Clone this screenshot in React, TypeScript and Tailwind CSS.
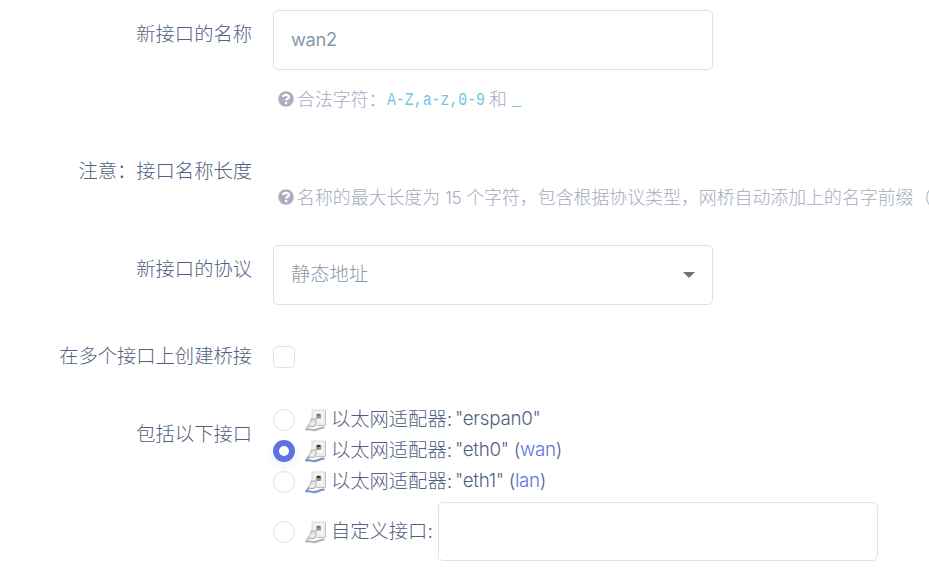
import type { ReactNode } from "react";

function Row({ label, className, labelClass, children }: { label: string; className: string; labelClass: string; children?: ReactNode }) {
  return (
    <div className={`flex ${className}`}>
      <div className={`w-[252px] shrink-0 text-right leading-[30px] whitespace-nowrap ${labelClass}`}>{label}</div>
      <div className="ml-[21px] shrink-0">{children}</div>
    </div>
  );
}

function HelpIcon() {
  return (
    <svg className="mr-[3px] h-4 w-4 shrink-0 -translate-y-px" viewBox="0 0 16 16">
      <circle cx="8" cy="8" r="7.800" fill="#a9aec3" />
      <path d="M5 6C5.300 4.500 6.400 3.900 8 3.900c1.700 0 2.900.8 2.900 2.200 0 1.900-2.800 1.500-2.800 3.500" fill="none" stroke="#fff" strokeWidth="2.400" />
      <rect x="6.800" y="10.800" width="2.600" height="2.500" rx="1.200" fill="#fff" />
    </svg>
  );
}

function Adapter({ active }: { active?: boolean }) {
  const cable = active ? "#7399c8" : "#b8b8b8";
  return (
    <svg className="h-[24px] w-[22px] shrink-0" viewBox="0 0 22 24">
      <path d="M7 2H20.300V17.300H7z" fill="#eeeeec" stroke="#dadad8" />
      <path d="M20.500 2V17.500H11" fill="none" stroke="#c2c2c0" />
      <rect x="9.500" y="3.500" width="8.500" height="10" fill="#f8f8f6" />
      <rect x="10.900" y="5.500" width="5.400" height="5.400" rx="1.500" fill={active ? "#9a9a90" : "#b5b5b5"} />
      <path d="M12 6h3.400v2H12z" fill={active ? "#303840" : "#7b7b7b"} />
      <path d="M12 8.200h3.400v1.400H12z" fill={active ? "#a8963a" : "#8c8c8c"} />
      <path d="M1 22C3 19.500 6 22.700 10 22S14.500 19.700 19.500 19.700" fill="none" stroke={cable} strokeWidth="2.300" />
      <path d="M.6 22L3.800 17.500" stroke={cable} strokeWidth="1.600" />
      <path d="M6 11H11V15L9 18.500H4.500L3.500 16L6 14z" fill="#e5e5e3" stroke="#a5a5a2" strokeWidth=".9" />
      <path d="M4.500 16H8L10 13.500" fill="none" stroke="#fafafa" strokeWidth="1.100" />
    </svg>
  );
}

function Radio({ checked }: { checked?: boolean }) {
  return (
    <span
      className={
        checked
          ? "flex h-[22px] w-[22px] shrink-0 items-center justify-center rounded-full bg-[#5e72e4] shadow-[0_5px_12px_rgba(94,114,228,0.10)]"
          : "h-[22px] w-[22px] shrink-0 rounded-full border border-[#dfe2ea] bg-white"
      }
    >
      {checked && <span className="h-[10px] w-[10px] rounded-full bg-white" />}
    </span>
  );
}

function Option({ title, name, zone, checked, active }: { title: string; name?: string; zone?: string; checked?: boolean; active?: boolean }) {
  return (
    <div className="flex h-[31px] items-center whitespace-nowrap">
      <Radio checked={checked} />
      <span className="ml-[10px] flex"><Adapter active={active} /></span>
      <span className="ml-[4px] w-[124px] shrink-0">{title}:</span>
      {name && (
        <span className="font-[Inter] text-[18.800px] font-[350] tracking-[-0.300px]">
          "{name}"{zone && <> (<span className="text-[#5e72e4]">{zone}</span>)</>}
        </span>
      )}
    </div>
  );
}

export default function App() {
  return (
    <div className="h-[572px] w-[929px] overflow-hidden bg-white pt-[10px] font-['Inter','Noto_Sans_CJK_SC',sans-serif] text-[19.300px] font-light text-[#525f7f]">
      <Row label="新接口的名称" className="h-[146px]" labelClass="pt-[9px]">
        <div className="flex h-[60px] w-[440px] items-center rounded-[5px] border border-[#dee2e6] px-[17px] text-[18.300px] font-normal tracking-[-0.350px] text-[#8898aa]">wan2</div>
        <div className="mt-[15px] flex h-[30px] items-center pl-[5px] text-[17.900px] whitespace-nowrap text-[#a4abc0]">
          <HelpIcon />
          <span className="w-[90px]">合法字符：</span>
          <span className="w-[102px] text-[#70c7df]"><code className="inline-block origin-left scale-x-[0.825] font-['Liberation_Mono',monospace] text-[18px]">A-Z,a-z,0-9</code></span>
          <span>和</span>
          <code className="ml-[5px] inline-block origin-left scale-x-[0.825] font-['Liberation_Mono',monospace] text-[18px] text-[#70c7df]">_</code>
        </div>
      </Row>
      <Row label="注意：接口名称长度" className="h-[89px]" labelClass="">
        <div className="mt-[27px] flex h-[30px] items-center pl-[5px] text-[17.900px] whitespace-nowrap text-[#a4abc0]">
          <HelpIcon />
          <span>名称的最大长度为 <span className="text-[17px] tracking-[-0.4px]">15</span> 个字符，包含根据协议类型，网桥自动添加上的名字前缀（</span>
        </div>
      </Row>
      <Row label="新接口的协议" className="h-[96px]" labelClass="pt-[9px]">
        <div className="flex h-[60px] w-[440px] items-center justify-between rounded-[5px] border border-[#dee2e6] px-[17px] text-[#8898aa]">
          <span className="-translate-y-px">静态地址</span>
          <span className="h-0 w-0 border-x-[6px] border-t-[6px] border-x-transparent border-t-[#737373]" />
        </div>
      </Row>
      <Row label="在多个接口上创建桥接" className="h-[63px]" labelClass="">
        <div className="mt-[5px] h-[22px] w-[22px] rounded-[5px] border border-[#dee0ea]" />
      </Row>
      <Row label="包括以下接口" className="" labelClass="pt-[15px]">
        <Option title="以太网适配器" name="erspan0" />
        <Option title="以太网适配器" name="eth0" zone="wan" checked active />
        <Option title="以太网适配器" name="eth1" zone="lan" active />
        <div className="mt-[4px] flex h-[60px] items-center">
          <div className="w-[165px] pt-px"><Option title="自定义接口" /></div>
          <div className="h-[59px] w-[440px] shrink-0 rounded-[5px] border border-[#dee2e6]" />
        </div>
      </Row>
    </div>
  );
}
